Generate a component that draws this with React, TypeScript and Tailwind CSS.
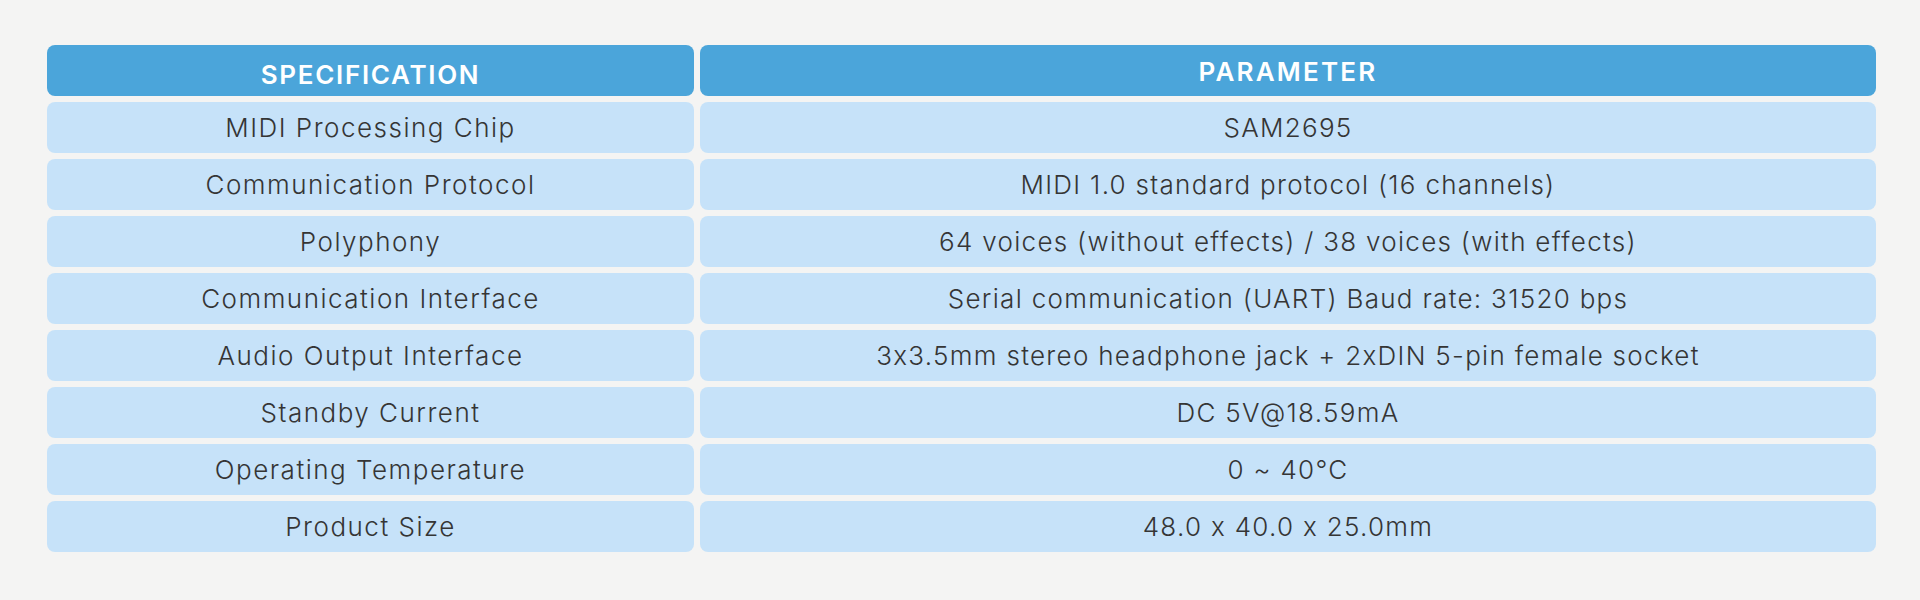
import React from "react";

const rows: [string, string][] = [
  ["MIDI Processing Chip", "SAM2695"],
  ["Communication Protocol", "MIDI 1.0 standard protocol (16 channels)"],
  ["Polyphony", "64 voices (without effects) / 38 voices (with effects)"],
  ["Communication Interface", "Serial communication (UART) Baud rate: 31520 bps"],
  ["Audio Output Interface", "3x3.5mm stereo headphone jack + 2xDIN 5-pin female socket"],
  ["Standby Current", "DC 5V@18.59mA"],
  ["Operating Temperature", "0 ~ 40°C"],
  ["Product Size", "48.0 x 40.0 x 25.0mm"],
];

export default function App() {
  return (
    <div className="w-[1920px] h-[600px] bg-[#f4f4f3] pt-[45px] pl-[47px] pr-[44px] font-['Inter','Noto_Sans',sans-serif] [font-feature-settings:'calt'_0]">
      <div className="grid grid-cols-[647px_1fr] gap-[6px]">
        <div className="h-[51px] rounded-lg bg-[#4ba5da] flex items-center justify-center pt-[8px] text-white text-[26px] font-semibold tracking-[1.7px]">
          SPECIFICATION
        </div>
        <div className="h-[51px] rounded-lg bg-[#4ba5da] flex items-center justify-center pt-[2px] text-white text-[26px] font-semibold tracking-[2.2px]">
          PARAMETER
        </div>
        {rows.map(([spec, param]) => (
          <React.Fragment key={spec}>
            <div className="h-[51px] rounded-lg bg-[#c6e2f9] flex items-center justify-center text-[#353535] text-[26px] font-light tracking-[1.5px]">
              {spec}
            </div>
            <div className="h-[51px] rounded-lg bg-[#c6e2f9] flex items-center justify-center text-[#353535] text-[26px] font-light tracking-[1.3px]">
              {param}
            </div>
          </React.Fragment>
        ))}
      </div>
    </div>
  );
}
